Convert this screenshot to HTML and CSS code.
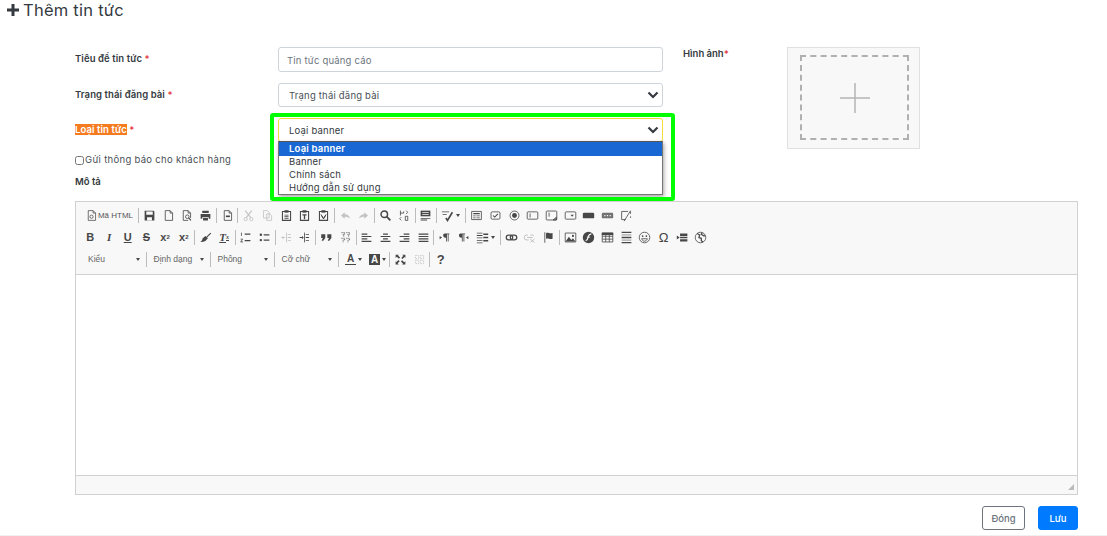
FILE: index.html
```html
<!DOCTYPE html>
<html lang="vi">
<head>
    <meta charset="UTF-8">
    <meta name="viewport" content="width=device-width, initial-scale=1.0">
    <title>Thêm tin tức</title>
    <link rel="stylesheet" href="styles.css">
</head>
<body>
    <!-- Icon set for the editor toolbar -->
    <svg class="icon-defs" xmlns="http://www.w3.org/2000/svg">
        <symbol id="i-source" viewBox="0 0 16 16"><path d="M4 2h6l3 3v9H4z M10 2v3h3" fill="none" stroke="currentColor"/><circle cx="8" cy="9.500" r="2" fill="none" stroke="currentColor"/></symbol>
        <symbol id="i-save" viewBox="0 0 16 16"><path d="M2 2h11l1 1v11H2z" fill="currentColor"/><path d="M4 3h8v4H4z M5 10h6v4H5z" fill="#f8f8f8"/></symbol>
        <symbol id="i-new" viewBox="0 0 16 16"><path d="M4 2h6l3 3v9H4z M10 2v3h3" fill="none" stroke="currentColor"/></symbol>
        <symbol id="i-preview" viewBox="0 0 16 16"><path d="M4 14V2h6l3 3v6 M10 2v3h3 M4 14h6" fill="none" stroke="currentColor"/><circle cx="9" cy="9.500" r="2.200" fill="none" stroke="currentColor"/><path d="M10.500 11l3 3" stroke="currentColor" stroke-width="1.500"/></symbol>
        <symbol id="i-print" viewBox="0 0 16 16"><path d="M4 2h8v3H4z M2 6h12v6h-2v-2H4v2H2z M5 11h6v3H5z" fill="currentColor"/></symbol>
        <symbol id="i-template" viewBox="0 0 16 16"><path d="M4 2h6l3 3v9H4z M10 2v3h3" fill="none" stroke="currentColor"/><path d="M6 8h5v2H6z" fill="currentColor"/></symbol>
        <symbol id="i-cut" viewBox="0 0 16 16"><path d="M4 2l7 9 M12 2l-7 9" stroke="currentColor" stroke-width="1.300"/><circle cx="4.500" cy="12.500" r="2" fill="none" stroke="currentColor"/><circle cx="11.500" cy="12.500" r="2" fill="none" stroke="currentColor"/></symbol>
        <symbol id="i-copy" viewBox="0 0 16 16"><path d="M3 2h5l2 2v7H3z M7 6h4l2 2v6H7z" fill="none" stroke="currentColor"/></symbol>
        <symbol id="i-paste" viewBox="0 0 16 16"><path d="M3 3h10v11H3z" fill="none" stroke="currentColor" stroke-width="1.300"/><path d="M5.500 1.500h5v3h-5z" fill="currentColor"/><path d="M5.500 7h5v1h-5z M5.500 9h5v1h-5z M5.500 11h5v1h-5z" fill="currentColor"/></symbol>
        <symbol id="i-paste-text" viewBox="0 0 16 16"><path d="M3 3h10v11H3z" fill="none" stroke="currentColor" stroke-width="1.300"/><path d="M5.500 1.500h5v3h-5z" fill="currentColor"/><path d="M5.500 6.500h5V8H8.800v4.500H7.200V8H5.500z" fill="currentColor"/></symbol>
        <symbol id="i-paste-word" viewBox="0 0 16 16"><path d="M3 3h10v11H3z" fill="none" stroke="currentColor" stroke-width="1.300"/><path d="M5.500 1.500h5v3h-5z" fill="currentColor"/><path d="M5 7l3 5 3-5 M11 7l-3 5-3-5" fill="none" stroke="currentColor" stroke-width="1.200"/></symbol>
        <symbol id="i-undo" viewBox="0 0 16 16"><path d="M7 4L2.500 8 7 12V9.500c3 0 5 .5 6.500 2.500-.5-3.500-3-5.500-6.500-5.500z" fill="currentColor"/></symbol>
        <symbol id="i-redo" viewBox="0 0 16 16"><path d="M9 4l4.500 4L9 12V9.500c-3 0-5 .5-6.500 2.500.5-3.500 3-5.500 6.500-5.500z" fill="currentColor"/></symbol>
        <symbol id="i-find" viewBox="0 0 16 16"><circle cx="6.500" cy="6.500" r="4" fill="none" stroke="currentColor" stroke-width="1.800"/><path d="M9.500 9.500l4.500 4.500" stroke="currentColor" stroke-width="2.200"/></symbol>
        <symbol id="i-replace" viewBox="0 0 16 16"><path d="M3 2v6M3 5h4V3M10 2l2 2-2 2M4 10l-2 2 2 2M9 9h3v5H9z" fill="none" stroke="currentColor"/></symbol>
        <symbol id="i-selectall" viewBox="0 0 16 16"><path d="M2 2h12v7H2z" fill="currentColor"/><path d="M4 4h8v1H4z M4 6h8v1H4z" fill="#f8f8f8"/><path d="M2 11h12v1H2z M2 13h8v1H2z" fill="currentColor"/></symbol>
        <symbol id="i-spell" viewBox="0 0 16 16"><path d="M1 3h9v1H1z M2 6h5v1H2z" fill="currentColor"/><path d="M6 11l2 3 6-10" fill="none" stroke="currentColor" stroke-width="2"/></symbol>
        <symbol id="i-form" viewBox="0 0 16 16"><path d="M2 3h12v10H2z" fill="none" stroke="currentColor"/><path d="M4 5h8v1.500H4z M4 8h3v1H4z M8 8h4v1H8z M4 10.500h3v1H4z M8 10.500h4v1H8z" fill="currentColor"/></symbol>
        <symbol id="i-checkbox" viewBox="0 0 16 16"><rect x="2.500" y="3.500" width="11" height="9" rx="1.500" fill="none" stroke="currentColor"/><path d="M5 8l2 2 4-4" fill="none" stroke="currentColor" stroke-width="1.300"/></symbol>
        <symbol id="i-radio" viewBox="0 0 16 16"><circle cx="8" cy="8" r="5.500" fill="none" stroke="currentColor"/><circle cx="8" cy="8" r="3" fill="currentColor"/></symbol>
        <symbol id="i-textfield" viewBox="0 0 16 16"><rect x="1.500" y="3.500" width="13" height="9" rx="1" fill="none" stroke="currentColor"/><path d="M5 5.500v5" stroke="currentColor"/></symbol>
        <symbol id="i-textarea" viewBox="0 0 16 16"><rect x="1.500" y="2.500" width="13" height="11" rx="1" fill="none" stroke="currentColor"/><path d="M5 4.500v5M14 10l-4 3.500h4z" stroke="currentColor" fill="currentColor" fill-opacity=".5"/></symbol>
        <symbol id="i-select" viewBox="0 0 16 16"><rect x="1.500" y="3.500" width="13" height="9" rx="1" fill="none" stroke="currentColor"/><path d="M8 7h4l-2 2.500z" fill="currentColor"/></symbol>
        <symbol id="i-button" viewBox="0 0 16 16"><rect x="1" y="4.500" width="14" height="7" rx="1.500" fill="currentColor"/></symbol>
        <symbol id="i-imgbutton" viewBox="0 0 16 16"><rect x="1" y="4.500" width="14" height="7" rx="1.500" fill="currentColor" opacity=".75"/><path d="M4 7.500h1.500v1.500H4z M7.200 7.500h1.500v1.500H7.200z M10.500 7.500H12v1.500h-1.500z" fill="#f8f8f8"/></symbol>
        <symbol id="i-hidden" viewBox="0 0 16 16"><path d="M10 3H2v10h5 M13 3v3 M13 9v2" fill="none" stroke="currentColor"/><path d="M5 15L13 2" stroke="currentColor"/></symbol>
        <symbol id="i-brush" viewBox="0 0 16 16"><path d="M9 7l5-5 1 1-5 5z" fill="currentColor"/><path d="M8 6l3 3-1.500 1.500c-1 2-4 3.500-8 3 2-1 2.500-2.500 3-4.500z" fill="currentColor"/></symbol>
        <symbol id="i-ol" viewBox="0 0 16 16"><path d="M7 3h7v1.500H7z M7 11h7v1.500H7z" fill="currentColor"/><path d="M3 2v4M2 10h2.500L2 13.500h3" fill="none" stroke="currentColor"/></symbol>
        <symbol id="i-ul" viewBox="0 0 16 16"><path d="M7 4h7v1.500H7z M7 10.500h7V12H7z" fill="currentColor"/><circle cx="3.500" cy="4.700" r="1.500" fill="currentColor"/><circle cx="3.500" cy="11.200" r="1.500" fill="currentColor"/></symbol>
        <symbol id="i-outdent" viewBox="0 0 16 16"><path d="M8 2v12" stroke="currentColor"/><path d="M9.500 4h4v1h-4z M9.500 7.500h4v1h-4z M9.500 11h4v1h-4z M2 7.500h4v1H2z" fill="currentColor"/><path d="M2 8l2-2v4z" fill="currentColor"/></symbol>
        <symbol id="i-indent" viewBox="0 0 16 16"><path d="M8 2v12" stroke="currentColor"/><path d="M9.500 4h4v1h-4z M9.500 7.500h4v1h-4z M9.500 11h4v1h-4z M2 7.500h3.500v1H2z" fill="currentColor"/><path d="M7 8L5 6v4z" fill="currentColor"/></symbol>
        <symbol id="i-quote" viewBox="0 0 16 16"><path d="M1.500 4h5v4.500L4 12H2l1.500-3.500h-2z M9 4h5v4.500L11.500 12h-2L11 8.500H9z" fill="currentColor"/></symbol>
        <symbol id="i-div" viewBox="0 0 16 16"><path d="M3 2h4v2H5v2h2 M9 2h4v2h-2v2h2 M3 9h4v2H5v3 M9 9h4v2h-2v3" fill="none" stroke="currentColor" stroke-dasharray="1.500 1"/></symbol>
        <symbol id="i-left" viewBox="0 0 16 16"><path d="M2 3h7v1.500H2z M2 6h12v1.500H2z M2 9h7v1.500H2z M2 12h12v1.500H2z" fill="currentColor"/></symbol>
        <symbol id="i-center" viewBox="0 0 16 16"><path d="M5 3h6v1.500H5z M2 6h12v1.500H2z M5 9h6v1.500H5z M2 12h12v1.500H2z" fill="currentColor"/></symbol>
        <symbol id="i-right" viewBox="0 0 16 16"><path d="M7 3h7v1.500H7z M2 6h12v1.500H2z M7 9h7v1.500H7z M2 12h12v1.500H2z" fill="currentColor"/></symbol>
        <symbol id="i-justify" viewBox="0 0 16 16"><path d="M2 3h12v1.500H2z M2 6h12v1.500H2z M2 9h12v1.500H2z M2 12h12v1.500H2z" fill="currentColor"/></symbol>
        <symbol id="i-ltr" viewBox="0 0 16 16"><path d="M8 3h6v1h-1v9h-1V4h-1v9h-1V8a2.500 2.500 0 0 1-2-5z" fill="currentColor"/><path d="M5 8L2 6v4z" fill="currentColor"/></symbol>
        <symbol id="i-rtl" viewBox="0 0 16 16"><path d="M4 3h6v1H9v9H8V4H7v9H6V8a2.500 2.500 0 0 1-2-5z" fill="currentColor"/><path d="M11 8l3-2v4z" fill="currentColor"/></symbol>
        <symbol id="i-lang" viewBox="0 0 16 16"><path d="M1 2h7v1H1z M1 5h7v1H1z M1 8h7v1H1z M1 11h7v1H1z M1 14h7v1H1z M9 3h6v2H9z M9 7h6v2H9z M9 11h6v2H9z" fill="currentColor"/></symbol>
        <symbol id="i-link" viewBox="0 0 16 16"><rect x="1.500" y="5" width="8" height="6" rx="3" fill="none" stroke="currentColor" stroke-width="1.500"/><rect x="6.500" y="5" width="8" height="6" rx="3" fill="none" stroke="currentColor" stroke-width="1.500"/></symbol>
        <symbol id="i-unlink" viewBox="0 0 16 16"><path d="M6 5H4.500a3 3 0 0 0 0 6H7 M9 5h2.500a3 3 0 0 1 2 1 M5 8h7 M9 10l5 4 M14 10l-5 4" fill="none" stroke="currentColor" stroke-width="1.200"/></symbol>
        <symbol id="i-anchor" viewBox="0 0 16 16"><path d="M3 1.500h1v13H3z" fill="currentColor"/><path d="M5 2.500c3-1 4 1 8 0v7c-4 1-5-1-8 0z" fill="currentColor"/></symbol>
        <symbol id="i-image" viewBox="0 0 16 16"><path d="M1.500 2.500h13v11h-13z" fill="#f8f8f8" stroke="currentColor"/><path d="M2 13l4-6 3 4 2-2 3 4z" fill="currentColor"/><circle cx="11" cy="6" r="1.300" fill="currentColor"/></symbol>
        <symbol id="i-flash" viewBox="0 0 16 16"><circle cx="8" cy="8" r="7" fill="currentColor"/><path d="M11.500 3.500C8 4 8 6 7.500 8S6.500 11.500 4.500 12" fill="none" stroke="#f8f8f8" stroke-width="1.500"/><path d="M6 7.500h4" stroke="#f8f8f8"/></symbol>
        <symbol id="i-table" viewBox="0 0 16 16"><path d="M1 2h14v3H1z" fill="currentColor"/><path d="M1.500 2.500h13v11h-13z M1.500 6.500h13 M1.500 10h13 M5.800 5v8.500 M10.200 5v8.500" fill="none" stroke="currentColor"/></symbol>
        <symbol id="i-hr" viewBox="0 0 16 16"><path d="M2 1h12v1.500H2z M2 7h12v2H2z M2 13.500h12V15H2z" fill="currentColor"/><path d="M2 4h12v1.500H2z M2 10.500h12V12H2z" fill="currentColor" opacity=".45"/></symbol>
        <symbol id="i-smiley" viewBox="0 0 16 16"><circle cx="8" cy="8" r="6.500" fill="none" stroke="currentColor"/><circle cx="5.700" cy="6.300" r="1.100" fill="currentColor"/><circle cx="10.300" cy="6.300" r="1.100" fill="currentColor"/><path d="M4.500 9.500h7c-.5 2-2 3-3.500 3s-3-1-3.500-3z" fill="none" stroke="currentColor"/></symbol>
        <symbol id="i-pagebreak" viewBox="0 0 16 16"><path d="M5 3h9v3H5z M5 7h9v2H5z M5 10h9v3H5z" fill="currentColor"/><path d="M1 5.500L4.500 8 1 10.500z" fill="currentColor"/></symbol>
        <symbol id="i-iframe" viewBox="0 0 16 16"><circle cx="8" cy="8" r="6.500" fill="none" stroke="currentColor"/><path d="M4 3l3 2-1 3 3 1 0 3 2 1.500 M10 2l-1 2 3 2 2 0" fill="none" stroke="currentColor" stroke-width="1.500"/></symbol>
        <symbol id="i-maximize" viewBox="0 0 16 16"><path d="M2 2h4L5 3l2.500 2.500-1.500 1.500L3.500 4.500 2 6z M14 2v4l-1-1-2.500 2.500L9 6l2.500-2.500L10 2z M2 14v-4l1 1 2.500-2.500L7 10l-2.500 2.500L6 14z M14 14h-4l1-1-2.500-2.500L10 9l2.500 2.500L14 10z" fill="currentColor"/></symbol>
        <symbol id="i-blocks" viewBox="0 0 16 16"><path d="M3 3h4v4H3z M9 3h4v4H9z M3 9h4v4H3z M9 9h4v4H9z" fill="none" stroke="currentColor" stroke-dasharray="1.500 1"/></symbol>
    </svg>

    <div class="page">
        <h1 class="page-title">
            <svg class="title-plus" viewBox="0 0 12 12"><path d="M4.500 0h3v4.500H12v3H7.500V12h-3V7.500H0v-3h4.500z"/></svg>
            Thêm tin tức
        </h1>

        <form class="news-form">
            <div class="top-row">
                <div class="fields">
                    <div class="field">
                        <label class="field-label">Tiêu đề tin tức <span class="req">*</span></label>
                        <input class="control" type="text" placeholder="Tin tức quảng cáo">
                    </div>
                    <div class="field">
                        <label class="field-label">Trạng thái đăng bài <span class="req">*</span></label>
                        <select class="control control-select"><option>Trạng thái đăng bài</option></select>
                    </div>
                    <div class="field">
                        <label class="field-label"><span class="marked">Loại tin tức</span> <span class="req">*</span></label>
                        <div class="select-open">
                            <select class="control control-select control-focus"><option>Loại banner</option></select>
                            <ul class="dropdown">
                                <li class="dropdown-item active">Loại banner</li>
                                <li class="dropdown-item">Banner</li>
                                <li class="dropdown-item">Chính sách</li>
                                <li class="dropdown-item">Hướng dẫn sử dụng</li>
                            </ul>
                            <div class="callout"></div>
                        </div>
                    </div>
                    <label class="notify"><input type="checkbox"> Gửi thông báo cho khách hàng</label>
                    <div class="desc-label">Mô tả</div>
                </div>
                <div class="image-label">Hình ảnh<span class="req">*</span></div>
                <div class="image-box">
                    <div class="image-drop">
                        <svg class="image-plus" viewBox="0 0 30 30"><path d="M15 0v30M0 15h30"/></svg>
                    </div>
                </div>
            </div>

            <div class="editor">
                <div class="toolbar">
                    <div class="tb-row">
                        <span class="tb-btn tb-source"><svg class="ic"><use href="#i-source"/></svg>Mã HTML</span>
                        <i class="tb-sep"></i>
                        <span class="tb-btn"><svg class="ic"><use href="#i-save"/></svg></span>
                        <span class="tb-btn"><svg class="ic"><use href="#i-new"/></svg></span>
                        <span class="tb-btn"><svg class="ic"><use href="#i-preview"/></svg></span>
                        <span class="tb-btn"><svg class="ic"><use href="#i-print"/></svg></span>
                        <i class="tb-sep"></i>
                        <span class="tb-btn"><svg class="ic"><use href="#i-template"/></svg></span>
                        <i class="tb-sep"></i>
                        <span class="tb-btn off"><svg class="ic"><use href="#i-cut"/></svg></span>
                        <span class="tb-btn off"><svg class="ic"><use href="#i-copy"/></svg></span>
                        <span class="tb-btn"><svg class="ic"><use href="#i-paste"/></svg></span>
                        <span class="tb-btn"><svg class="ic"><use href="#i-paste-text"/></svg></span>
                        <span class="tb-btn"><svg class="ic"><use href="#i-paste-word"/></svg></span>
                        <i class="tb-sep"></i>
                        <span class="tb-btn off"><svg class="ic"><use href="#i-undo"/></svg></span>
                        <span class="tb-btn off"><svg class="ic"><use href="#i-redo"/></svg></span>
                        <i class="tb-sep"></i>
                        <span class="tb-btn"><svg class="ic"><use href="#i-find"/></svg></span>
                        <span class="tb-btn"><svg class="ic"><use href="#i-replace"/></svg></span>
                        <i class="tb-sep"></i>
                        <span class="tb-btn"><svg class="ic"><use href="#i-selectall"/></svg></span>
                        <i class="tb-sep"></i>
                        <span class="tb-btn tb-arrow"><svg class="ic"><use href="#i-spell"/></svg><b class="caret"></b></span>
                        <i class="tb-sep"></i>
                        <span class="tb-btn"><svg class="ic"><use href="#i-form"/></svg></span>
                        <span class="tb-btn"><svg class="ic"><use href="#i-checkbox"/></svg></span>
                        <span class="tb-btn"><svg class="ic"><use href="#i-radio"/></svg></span>
                        <span class="tb-btn"><svg class="ic"><use href="#i-textfield"/></svg></span>
                        <span class="tb-btn"><svg class="ic"><use href="#i-textarea"/></svg></span>
                        <span class="tb-btn"><svg class="ic"><use href="#i-select"/></svg></span>
                        <span class="tb-btn"><svg class="ic"><use href="#i-button"/></svg></span>
                        <span class="tb-btn"><svg class="ic"><use href="#i-imgbutton"/></svg></span>
                        <span class="tb-btn"><svg class="ic"><use href="#i-hidden"/></svg></span>
                    </div>
                    <div class="tb-row">
                        <span class="tb-btn tb-letter tb-b">B</span>
                        <span class="tb-btn tb-letter tb-i">I</span>
                        <span class="tb-btn tb-letter tb-u">U</span>
                        <span class="tb-btn tb-letter tb-s">S</span>
                        <span class="tb-btn tb-letter">x<sub>2</sub></span>
                        <span class="tb-btn tb-letter">x<sup>2</sup></span>
                        <i class="tb-sep"></i>
                        <span class="tb-btn"><svg class="ic"><use href="#i-brush"/></svg></span>
                        <span class="tb-btn tb-letter tb-tx">T<sub>x</sub></span>
                        <i class="tb-sep"></i>
                        <span class="tb-btn"><svg class="ic"><use href="#i-ol"/></svg></span>
                        <span class="tb-btn"><svg class="ic"><use href="#i-ul"/></svg></span>
                        <i class="tb-sep"></i>
                        <span class="tb-btn off"><svg class="ic"><use href="#i-outdent"/></svg></span>
                        <span class="tb-btn"><svg class="ic"><use href="#i-indent"/></svg></span>
                        <i class="tb-sep"></i>
                        <span class="tb-btn"><svg class="ic"><use href="#i-quote"/></svg></span>
                        <span class="tb-btn"><svg class="ic"><use href="#i-div"/></svg></span>
                        <i class="tb-sep"></i>
                        <span class="tb-btn"><svg class="ic"><use href="#i-left"/></svg></span>
                        <span class="tb-btn"><svg class="ic"><use href="#i-center"/></svg></span>
                        <span class="tb-btn"><svg class="ic"><use href="#i-right"/></svg></span>
                        <span class="tb-btn"><svg class="ic"><use href="#i-justify"/></svg></span>
                        <i class="tb-sep"></i>
                        <span class="tb-btn"><svg class="ic"><use href="#i-ltr"/></svg></span>
                        <span class="tb-btn"><svg class="ic"><use href="#i-rtl"/></svg></span>
                        <span class="tb-btn tb-arrow"><svg class="ic"><use href="#i-lang"/></svg><b class="caret"></b></span>
                        <i class="tb-sep"></i>
                        <span class="tb-btn"><svg class="ic"><use href="#i-link"/></svg></span>
                        <span class="tb-btn off"><svg class="ic"><use href="#i-unlink"/></svg></span>
                        <span class="tb-btn"><svg class="ic"><use href="#i-anchor"/></svg></span>
                        <i class="tb-sep"></i>
                        <span class="tb-btn"><svg class="ic"><use href="#i-image"/></svg></span>
                        <span class="tb-btn"><svg class="ic"><use href="#i-flash"/></svg></span>
                        <span class="tb-btn"><svg class="ic"><use href="#i-table"/></svg></span>
                        <span class="tb-btn"><svg class="ic"><use href="#i-hr"/></svg></span>
                        <span class="tb-btn"><svg class="ic"><use href="#i-smiley"/></svg></span>
                        <span class="tb-btn tb-letter tb-omega">Ω</span>
                        <span class="tb-btn"><svg class="ic"><use href="#i-pagebreak"/></svg></span>
                        <span class="tb-btn"><svg class="ic"><use href="#i-iframe"/></svg></span>
                    </div>
                    <div class="tb-row">
                        <span class="tb-combo">Kiểu<b class="caret"></b></span>
                        <i class="tb-sep"></i>
                        <span class="tb-combo">Định dạng<b class="caret"></b></span>
                        <i class="tb-sep"></i>
                        <span class="tb-combo">Phông<b class="caret"></b></span>
                        <i class="tb-sep"></i>
                        <span class="tb-combo">Cỡ chữ<b class="caret"></b></span>
                        <i class="tb-sep"></i>
                        <span class="tb-btn tb-arrow tb-color"><span class="color-a">A</span><b class="caret"></b></span>
                        <span class="tb-btn tb-arrow tb-color"><span class="color-bg">A</span><b class="caret"></b></span>
                        <i class="tb-sep"></i>
                        <span class="tb-btn"><svg class="ic"><use href="#i-maximize"/></svg></span>
                        <span class="tb-btn off"><svg class="ic"><use href="#i-blocks"/></svg></span>
                        <i class="tb-sep"></i>
                        <span class="tb-btn tb-letter tb-help">?</span>
                    </div>
                </div>
                <div class="editor-body"></div>
                <div class="editor-foot"><i class="resizer"></i></div>
            </div>

            <div class="form-actions">
                <button class="btn btn-close" type="button">Đóng</button>
                <button class="btn btn-save" type="submit">Lưu</button>
            </div>
        </form>
    </div>
</body>
</html>
```

FILE: styles.css
```css
* {
    box-sizing: border-box;
}

html, body {
    margin: 0;
    height: 536px;
    overflow: hidden;
}

body {
    font-family: Inter, "Open Sans", sans-serif;
    font-size: 10px;
    color: #343a40;
    background-color: #fff;
}

.icon-defs {
    display: none;
}

.page {
    height: 536px;
    border-bottom: 1px solid #f0f0f0;
}

/* Title */
.page-title {
    display: flex;
    align-items: center;
    gap: 4px;
    height: 47px;
    margin: 0;
    padding: 0 0 27px 7px;
    font-size: 16.5px;
    font-weight: 400;
    letter-spacing: 0.25px;
    color: #343a40;
}

.title-plus {
    width: 12px;
    height: 12px;
    fill: #343a40;
}

/* Form */
.news-form {
    padding: 0 29px 0 75px;
}

.top-row {
    display: flex;
    height: 154px;
}

.fields {
    width: 588px;
}

.field {
    display: flex;
    align-items: center;
    margin-bottom: 11px;
}

.field-label {
    width: 203px;
    font-weight: 600;
    font-size: 9.5px;
    letter-spacing: 0.1px;
    padding-bottom: 2px;
}

.req {
    color: #e5343d;
}

.marked {
    background-color: #f47b20;
    color: #fff;
}

.control {
    display: block;
    width: 385px;
    height: 24px;
    padding: 0 8px;
    border: 1px solid #ced4da;
    border-radius: 3px;
    background-color: #fff;
    font-family: inherit;
    font-size: 9.5px;
    letter-spacing: 0.2px;
    color: #495057;
}

input.control {
    height: 25px;
    padding-top: 1px;
}

input.control::placeholder {
    color: #6c757d;
}

.control-select {
    padding-left: 10px;
    appearance: none;
    background-image: url("data:image/svg+xml,%3Csvg xmlns='http://www.w3.org/2000/svg' viewBox='0 0 12 8'%3E%3Cpath d='M1.500 1.500L6 6l4.500-4.500' fill='none' stroke='%23343a40' stroke-width='2.200'/%3E%3C/svg%3E");
    background-repeat: no-repeat;
    background-position: right 3px center;
    background-size: 12px 8px;
}

.control-focus {
    border-color: #f2dc3c;
    color: #343a40;
}

/* Open dropdown */
.select-open {
    position: relative;
}

.dropdown {
    position: absolute;
    top: 23px;
    left: 0;
    width: 385px;
    height: 54px;
    margin: 0;
    padding: 0;
    list-style: none;
    background-color: #fff;
    border: 1px solid #767676;
    border-top-color: #555;
    box-shadow: 1px 2px 4px rgba(0, 0, 0, 0.35);
    font-size: 9.5px;
    letter-spacing: 0.2px;
    color: #343a40;
}

.dropdown-item {
    height: 13px;
    padding-left: 10px;
    line-height: 11px;
}

.dropdown-item.active {
    height: 14px;
    line-height: 13px;
    background-color: #1967d2;
    color: #fff;
    font-weight: 600;
}

.callout {
    position: absolute;
    top: -5px;
    left: -8px;
    width: 405px;
    height: 88px;
    border: 4px solid #00ff00;
    border-radius: 3px;
    pointer-events: none;
}

.notify {
    display: flex;
    align-items: center;
    gap: 1px;
    margin-top: 12px;
    font-size: 9.5px;
    letter-spacing: 0.3px;
    color: #495057;
}

.notify input {
    width: 9px;
    height: 9px;
    margin: 2px 0 0;
}

.desc-label {
    margin-top: 11px;
    font-weight: 600;
    font-size: 9.5px;
}

.image-label {
    width: 104px;
    margin-left: 20px;
    padding-top: 1px;
    font-weight: 600;
    font-size: 9.5px;
}

.image-box {
    display: flex;
    width: 133px;
    height: 102px;
    padding: 7px 10px 8px 12px;
    background-color: #f8f8f8;
    border: 1px solid #e0e0e0;
}

.image-drop {
    display: flex;
    align-items: center;
    justify-content: center;
    width: 100%;
    border: 2px dashed #b0b0b0;
}

.image-plus {
    width: 30px;
    height: 30px;
    stroke: #b4b4b4;
    stroke-width: 1.5;
}

/* Editor */
.editor {
    height: 294px;
    display: flex;
    flex-direction: column;
    border: 1px solid #d1d1d1;
}

.toolbar {
    height: 73px;
    padding: 2px 0 0 5px;
    background-color: #f8f8f8;
    border-bottom: 1px solid #d1d1d1;
}

.tb-row {
    display: flex;
    align-items: center;
    height: 22px;
    color: #474747;
}

.tb-btn {
    display: flex;
    align-items: center;
    justify-content: center;
    flex: none;
    width: 18.7px;
    height: 22px;
}

.tb-btn.off {
    opacity: 0.3;
}

.ic {
    width: 13px;
    height: 13px;
}

.tb-source {
    width: 56px;
    gap: 0;
    font-family: "Liberation Sans", Arial, sans-serif;
    font-size: 8px;
    color: #555;
}

.tb-arrow {
    width: 26px;
    justify-content: flex-start;
    padding-left: 3px;
    gap: 2px;
}

.tb-sep {
    flex: none;
    width: 1px;
    height: 15px;
    margin: 0 1px;
    background-color: #bcbcbc;
}

.tb-letter {
    font-family: "Liberation Sans", Arial, sans-serif;
    font-size: 11px;
    font-weight: 700;
}

.tb-letter sub,
.tb-letter sup {
    font-size: 6px;
    line-height: 0;
}

.tb-i {
    font-family: "Liberation Serif", serif;
    font-style: italic;
}

.tb-u {
    text-decoration: underline;
}

.tb-s {
    text-decoration: line-through;
}

.tb-tx {
    font-family: "Liberation Serif", serif;
    font-style: italic;
    text-decoration: underline;
}

.tb-omega {
    font-size: 13px;
    font-weight: 400;
}

.tb-help {
    font-size: 13px;
}

.caret {
    flex: none;
    width: 0;
    height: 0;
    border-left: 2.5px solid transparent;
    border-right: 2.5px solid transparent;
    border-top: 3px solid #474747;
}

.tb-combo {
    display: flex;
    align-items: center;
    justify-content: space-between;
    flex: none;
    width: 61px;
    padding: 0 5px 0 5.5px;
    font-family: "Liberation Sans", Arial, sans-serif;
    font-size: 8.5px;
    color: #666;
}

.tb-combo:first-child {
    width: 64px;
    padding-left: 7px;
}

.tb-color {
    width: 24px;
    padding-left: 5px;
    font-family: "Liberation Sans", Arial, sans-serif;
    font-size: 10px;
    font-weight: 700;
}

.color-a {
    width: 11px;
    text-align: center;
    border-bottom: 1px solid #474747;
    line-height: 10px;
}

.color-bg {
    width: 11px;
    text-align: center;
    color: #f8f8f8;
    background-color: #474747;
    line-height: 11px;
}

.editor-body {
    flex: 1;
    background-color: #fff;
}

.editor-foot {
    position: relative;
    height: 19px;
    background-color: #f8f8f8;
    border-top: 1px solid #d1d1d1;
}

.resizer {
    position: absolute;
    right: 3px;
    bottom: 4px;
    width: 0;
    height: 0;
    border-left: 6px solid transparent;
    border-bottom: 6px solid #bbb;
}

/* Buttons */
.form-actions {
    display: flex;
    justify-content: flex-end;
    gap: 13px;
    margin-top: 11px;
}

.btn {
    height: 24px;
    border-radius: 3px;
    font-family: inherit;
    font-size: 9.5px;
    font-weight: 500;
    cursor: pointer;
}

.btn-close {
    width: 43px;
    background-color: #fff;
    border: 1px solid #6c757d;
    color: #6c757d;
}

.btn-save {
    width: 40px;
    background-color: #007bff;
    border: 1px solid #007bff;
    color: #fff;
}
```
